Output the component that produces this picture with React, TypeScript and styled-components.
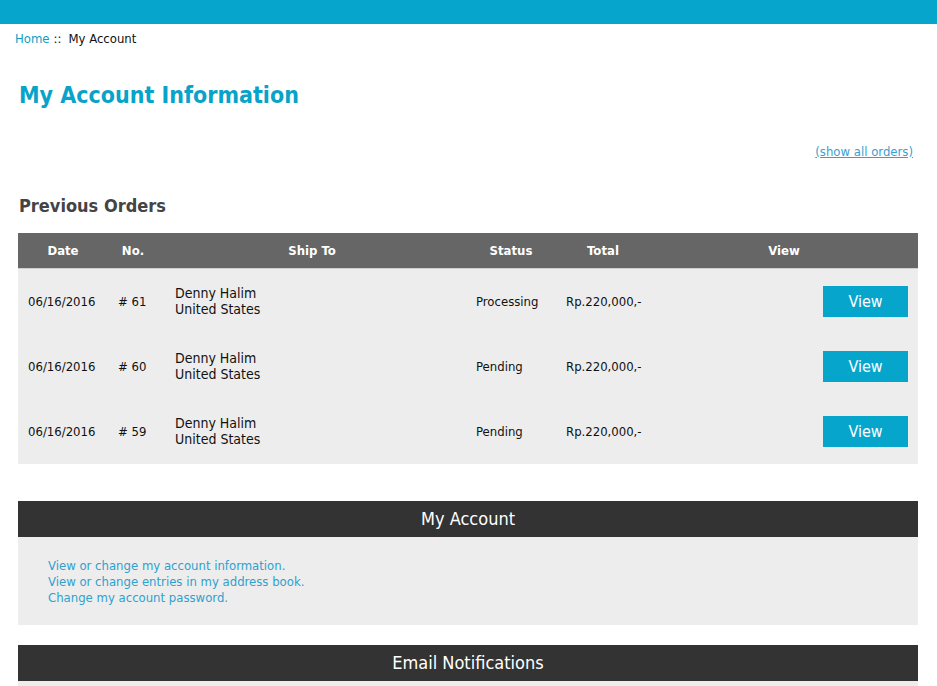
import React from "react";
import styled, { createGlobalStyle } from "styled-components";

const GlobalStyle = createGlobalStyle`
  body {
    margin: 0;
    background: #ffffff;
    font-family: "DejaVu Sans Condensed", "DejaVu Sans", sans-serif;
    color: #222;
  }
`;

interface Order {
  date: string;
  no: number;
  name: string;
  country: string;
  status: string;
  total: string;
}

const orders: Order[] = [
  { date: "06/16/2016", no: 61, name: "Denny Halim", country: "United States", status: "Processing", total: "Rp.220,000,-" },
  { date: "06/16/2016", no: 60, name: "Denny Halim", country: "United States", status: "Pending", total: "Rp.220,000,-" },
  { date: "06/16/2016", no: 59, name: "Denny Halim", country: "United States", status: "Pending", total: "Rp.220,000,-" },
];

const accountLinks = [
  "View or change my account information.",
  "View or change entries in my address book.",
  "Change my account password.",
];

const App: React.FC = () => {
  return (
    <>
      <GlobalStyle />
      <TopBar />
      <Page>
        <Breadcrumb>
          <a href="#">Home</a>
          <span className="sep">::</span>
          <span>My Account</span>
        </Breadcrumb>

        <Title>My Account Information</Title>

        <ShowAll>
          <a href="#">(show all orders)</a>
        </ShowAll>

        <SubTitle>Previous Orders</SubTitle>

        <OrderTable>
          <HeadRow>
            <div>Date</div>
            <div>No.</div>
            <div>Ship To</div>
            <div>Status</div>
            <div>Total</div>
            <div>View</div>
          </HeadRow>
          {orders.map((order) => (
            <Row key={order.no}>
              <Cell>{order.date}</Cell>
              <Cell># {order.no}</Cell>
              <ShipCell>
                {order.name}
                <br />
                {order.country}
              </ShipCell>
              <Cell>{order.status}</Cell>
              <Cell>{order.total}</Cell>
              <ViewCell>
                <ViewButton>View</ViewButton>
              </ViewCell>
            </Row>
          ))}
        </OrderTable>

        <Box>
          <BoxTitle>My Account</BoxTitle>
          <BoxBody>
            {accountLinks.map((text) => (
              <a href="#" key={text}>
                {text}
              </a>
            ))}
          </BoxBody>
        </Box>

        <Box>
          <BoxTitle>Email Notifications</BoxTitle>
          <BoxBody />
        </Box>
      </Page>
    </>
  );
};

const TopBar = styled.div`
  height: 24px;
  background: #06a5cc;
`;

const Page = styled.div`
  width: 900px;
  margin-left: 18px;
`;

const Breadcrumb = styled.div`
  padding-top: 7px;
  margin-left: -3px;
  font-size: 13px;
  line-height: 16px;
  color: #111;

  a {
    color: #0a9fc6;
    text-decoration: none;
  }

  .sep {
    margin: 0 7px 0 4px;
  }
`;

const Title = styled.h1`
  margin: 33px 0 0 1px;
  font-size: 23px;
  line-height: 30px;
  font-weight: 700;
  color: #08a3c9;
`;

const ShowAll = styled.div`
  margin-top: 34px;
  padding-right: 5px;
  text-align: right;
  font-size: 13px;
  line-height: 16px;

  a {
    color: #3a9fd0;
    text-decoration: underline;
  }
`;

const SubTitle = styled.h2`
  margin: 35px 0 0 1px;
  font-size: 18px;
  line-height: 22px;
  font-weight: 700;
  color: #444;
`;

const OrderTable = styled.div`
  margin-top: 16px;
  background: #ededed;
`;

const grid = `
  display: grid;
  grid-template-columns: 90px 57px 301px 90px 94px 268px;
`;

const HeadRow = styled.div`
  ${grid}
  height: 35px;
  align-items: center;
  background: #666666;
  border-bottom: 1px solid #cfcfcf;
  color: #fff;
  font-size: 13px;
  font-weight: 700;
  text-align: center;

  div:nth-child(2),
  div:nth-child(3) {
    padding-right: 7px;
  }
`;

const Row = styled.div`
  ${grid}
  height: 65px;
  align-items: center;
`;

const Cell = styled.div`
  padding-left: 10px;
  font-size: 13px;
  line-height: 16px;
  color: #111;
`;

const ShipCell = styled(Cell)`
  font-size: 14px;
  margin-top: -2px;
`;

const ViewCell = styled.div`
  display: flex;
  justify-content: flex-end;
  padding-right: 10px;
`;

const ViewButton = styled.button`
  width: 85px;
  height: 31px;
  border: none;
  background: #06a5cc;
  color: #fff;
  font-family: inherit;
  font-size: 16px;
  cursor: pointer;
`;

const Box = styled.div`
  margin-top: 37px;

  & + & {
    margin-top: 20px;
  }
`;

const BoxTitle = styled.div`
  height: 36px;
  line-height: 36px;
  background: #333333;
  color: #fff;
  font-size: 18px;
  text-align: center;
`;

const BoxBody = styled.div`
  display: flex;
  flex-direction: column;
  min-height: 40px;
  padding: 21px 30px 19px;
  background: #ededed;

  a {
    font-size: 13px;
    line-height: 16px;
    color: #2da1cf;
    text-decoration: none;
    align-self: flex-start;
  }
`;

export default App;
